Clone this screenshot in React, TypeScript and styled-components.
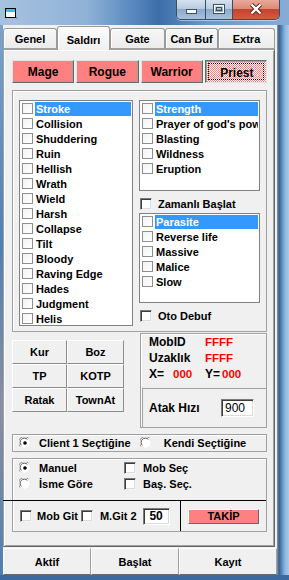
import React from "react";
import styled, { createGlobalStyle } from "styled-components";

const GlobalStyle = createGlobalStyle`
  html, body {
    margin: 0;
    padding: 0;
    background: #fff;
  }
  body {
    font-family: "Liberation Sans", Arial, sans-serif;
    font-size: 11px;
    color: #000;
  }
`;

const Window = styled.div`
  width: 289px;
  height: 580px;
  display: flex;
  flex-direction: column;
  overflow: hidden;
  background: linear-gradient(180deg, #6f97c4 0%, #4d7cb1 60%, #3c6aa0 100%);
`;

const TitleBar = styled.div`
  height: 25px;
  display: flex;
  align-items: flex-start;
  background: linear-gradient(
    90deg,
    #a6c2e0 0%,
    #90b2d7 30%,
    #5b8bc0 45%,
    #3e6ea8 55%,
    #6b99cd 72%,
    #86acd6 100%
  );
`;

const TitleIcon = styled.svg`
  margin: 8px 0 0 5px;
`;

const CaptionGroup = styled.div`
  margin-left: auto;
  margin-right: 9px;
  height: 19px;
  display: flex;
  border: 1px solid #3a4d66;
  border-top: none;
  border-radius: 0 0 5px 5px;
  overflow: hidden;
  box-shadow: 0 1px 0 rgba(255, 255, 255, 0.45);
`;

const CaptionBtn = styled.div<{ $w: number; $close?: boolean }>`
  width: ${(p) => p.$w}px;
  display: flex;
  justify-content: center;
  align-items: flex-start;
  padding-top: ${(p) => (p.$close ? 3 : 4)}px;
  box-sizing: border-box;
  background: ${(p) =>
    p.$close
      ? "linear-gradient(180deg, #e9a99a 0%, #dc8b78 45%, #c4442c 50%, #d65a3e 100%)"
      : "linear-gradient(180deg, #d6e2ef 0%, #b7cbe0 45%, #8eaacb 50%, #a8c1dc 100%)"};
  & + & {
    border-left: 1px solid #3a4d66;
  }
`;

const Body = styled.div`
  display: flex;
  height: 550px;
`;

const LeftFrame = styled.div`
  width: 3px;
  background: linear-gradient(180deg, #7aa2cc 0%, #4f80b6 40%, #8a8fa0 70%, #4e7fb4 100%);
`;

const RightFrame = styled.div`
  flex: 1;
  background: linear-gradient(
    90deg,
    #8b97a6 0,
    #3a5f88 2px,
    #4c7eb4 4px,
    #8db6df 8px,
    #a9c9e7 12px
  );
`;

const Client = styled.div`
  width: 274px;
  height: 550px;
  background: #f0f0f0;
  display: flex;
  flex-direction: column;
`;

const TabStrip = styled.div`
  height: 24px;
  display: flex;
  align-items: flex-end;
  position: relative;
  z-index: 1;
`;

const Tab = styled.div<{ $w: number; $active?: boolean }>`
  width: ${(p) => p.$w}px;
  height: ${(p) => (p.$active ? 24 : 21)}px;
  margin-bottom: ${(p) => (p.$active ? -1 : 0)}px;
  box-sizing: border-box;
  border: 1px solid #9a9a9a;
  border-bottom: ${(p) => (p.$active ? "none" : "1px solid #a0a0a0")};
  border-radius: 3px 3px 0 0;
  box-shadow: inset 1px 1px #fff;
  background: ${(p) =>
    p.$active ? "linear-gradient(180deg, #fcfcfc, #f0f0f0)" : "linear-gradient(180deg, #f6f6f6, #ececec)"};
  display: flex;
  align-items: center;
  justify-content: center;
  padding-top: ${(p) => (p.$active ? 2 : 0)}px;
  font-weight: bold;
  font-size: 11px;
`;

const TabPage = styled.div`
  box-sizing: border-box;
  width: 272px;
  height: 498px;
  border: 1px solid;
  border-color: #a0a0a0 #696969 #696969 #a0a0a0;
  box-shadow: inset 1px 1px #fff, inset -1px -1px #a0a0a0;
  padding: 10px 7px 0 8px;
  display: flex;
  flex-direction: column;
`;

const ClassRow = styled.div`
  display: grid;
  grid-template-columns: repeat(4, 1fr);
  gap: 2px;
  height: 23px;
`;

const ClassButton = styled.div<{ $pressed?: boolean }>`
  box-sizing: border-box;
  display: flex;
  align-items: center;
  justify-content: center;
  font-weight: bold;
  font-size: 12px;
  border: 1px solid;
  border-color: ${(p) =>
    p.$pressed ? "#696969 #e3e3e3 #e3e3e3 #696969" : "#e3e3e3 #696969 #696969 #e3e3e3"};
  box-shadow: ${(p) => (p.$pressed ? "inset 1px 1px #a0a0a0" : "inset -1px -1px #a0a0a0")};
  background-color: #ff8080;
  background-image: ${(p) =>
    p.$pressed ? "repeating-conic-gradient(#ff8080 0% 25%, #ffffff 0% 50%)" : "none"};
  background-size: 2px 2px;
  padding: ${(p) => (p.$pressed ? "2px 0 0 2px" : "0")};
  outline: ${(p) => (p.$pressed ? "1px dotted #000" : "none")};
  outline-offset: -4px;
`;

const SkillGroup = styled.div`
  margin-top: 7px;
  height: 242px;
  box-sizing: border-box;
  border: 1px solid #a0a0a0;
  box-shadow: inset 1px 1px #fff;
  padding: 9px 6px 5px 6px;
  display: flex;
  gap: 6px;
`;

const ListBox = styled.div<{ $w: number; $h: number }>`
  box-sizing: border-box;
  width: ${(p) => p.$w}px;
  height: ${(p) => p.$h}px;
  flex: none;
  border: 1px solid #828282;
  background: #fff;
  padding: 0 1px 0 2px;
  overflow: hidden;
`;

const ListItem = styled.div`
  height: 15px;
  display: flex;
  align-items: center;
  white-space: nowrap;
`;

const ListCheck = styled.span`
  flex: none;
  width: 11px;
  height: 11px;
  box-sizing: border-box;
  border: 1px solid #8e8f8f;
  background: linear-gradient(135deg, #f2f2f2, #fff);
  margin-right: 2px;
`;

const ItemLabel = styled.span<{ $selected?: boolean }>`
  flex: 1;
  height: 14px;
  line-height: 14px;
  padding-left: 1px;
  overflow: hidden;
  font-weight: bold;
  font-size: 11px;
  background: ${(p) => (p.$selected ? "#3399ff" : "transparent")};
  color: ${(p) => (p.$selected ? "#fff" : "#000")};
`;

const RightColumn = styled.div`
  width: 121px;
  display: flex;
  flex-direction: column;
`;

const CheckRow = styled.div<{ $top: number }>`
  margin-top: ${(p) => p.$top}px;
  height: 13px;
  display: flex;
  align-items: center;
  font-weight: bold;
  font-size: 11px;
  white-space: nowrap;
`;

const ClassicCheck = styled.span<{ $gap?: number; $left?: number }>`
  flex: none;
  width: 12px;
  height: 12px;
  box-sizing: border-box;
  border: 1px solid;
  border-color: #7a7a7a #f4f4f4 #f4f4f4 #7a7a7a;
  box-shadow: inset 1px 1px #3c3c3c, inset -1px -1px #dcdcdc;
  background: #fff;
  margin-left: ${(p) => p.$left ?? 0}px;
  margin-right: ${(p) => p.$gap ?? 6}px;
`;

const LowerRow = styled.div`
  margin-top: 1px;
  display: flex;
  align-items: flex-start;
`;

const ButtonGrid = styled.div`
  margin-top: 7px;
  display: grid;
  grid-template-columns: 55px 57px;
  grid-auto-rows: 24px;
`;

const GridButton = styled.div`
  box-sizing: border-box;
  display: flex;
  align-items: center;
  justify-content: center;
  font-weight: bold;
  font-size: 11px;
  border: 1px solid;
  border-color: #fff #8c8c8c #8c8c8c #fff;
  background: #f0f0f0;
`;

const InfoGroup = styled.div`
  margin-left: 16px;
  width: 127px;
  height: 95px;
  box-sizing: border-box;
  border: 1px solid #a0a0a0;
  box-shadow: inset 1px 1px #fff;
  display: flex;
  flex-direction: column;
`;

const InfoTop = styled.div`
  height: 54px;
  padding: 0 0 0 8px;
  display: flex;
  flex-direction: column;
  gap: 1px;
`;

const InfoRow = styled.div`
  height: 15px;
  display: flex;
  align-items: center;
  font-weight: bold;
  font-size: 12px;
  white-space: nowrap;
`;

const InfoCell = styled.span<{ $w?: number; $red?: boolean }>`
  width: ${(p) => (p.$w ? `${p.$w}px` : "auto")};
  color: ${(p) => (p.$red ? "#ff0000" : "#000")};
  font-size: ${(p) => (p.$red ? 11.5 : 12)}px;
`;

const InfoBottom = styled.div`
  flex: 1;
  margin-left: 1px;
  border-top: 1px solid #a0a0a0;
  border-left: 1px solid #a0a0a0;
  display: flex;
  align-items: center;
  padding-left: 6px;
  font-weight: bold;
  font-size: 12px;
`;

const Field = styled.div<{ $w: number; $h: number; $bold?: boolean }>`
  width: ${(p) => p.$w}px;
  height: ${(p) => p.$h}px;
  box-sizing: border-box;
  border: 1px solid;
  border-color: #7a7a7a #fff #fff #7a7a7a;
  box-shadow: inset 1px 1px #3c3c3c, inset -1px -1px #dcdcdc;
  background: #fff;
  display: flex;
  align-items: center;
  justify-content: ${(p) => (p.$bold ? "center" : "flex-start")};
  padding-left: ${(p) => (p.$bold ? 0 : 3)}px;
  font-weight: ${(p) => (p.$bold ? "bold" : "normal")};
  font-size: 12px;
`;

const RadioBox = styled.div`
  margin-top: 6px;
  height: 18px;
  box-sizing: border-box;
  border: 1px solid #a0a0a0;
  box-shadow: inset 1px 1px #fff;
  display: flex;
  align-items: center;
  padding-left: 6px;
  font-weight: bold;
  font-size: 11px;
  white-space: nowrap;
`;

const RadioOption = styled.div<{ $gap: number; $left?: number }>`
  display: flex;
  align-items: center;
  gap: ${(p) => p.$gap}px;
  margin-left: ${(p) => p.$left ?? 0}px;
`;

const OptionsBox = styled.div`
  margin-top: 6px;
  height: 74px;
  box-sizing: border-box;
  border: 1px solid #a0a0a0;
  box-shadow: inset 1px 1px #fff;
  display: flex;
  flex-direction: column;
`;

const OptionsTop = styled.div`
  height: 41px;
  box-sizing: border-box;
  padding: 2px 0 0 6px;
  display: grid;
  grid-template-columns: 105px 1fr;
  grid-auto-rows: 13px;
  row-gap: 3px;
  font-weight: bold;
  font-size: 11px;
`;

const OptionCell = styled.div<{ $gap: number }>`
  display: flex;
  align-items: center;
  gap: ${(p) => p.$gap}px;
  white-space: nowrap;
`;

const OptionsBottom = styled.div`
  margin-left: -10px;
  height: 31px;
  box-sizing: border-box;
  border-top: 1px solid #000;
  display: flex;
  font-weight: bold;
  font-size: 11px;
`;

const BottomLeft = styled.div`
  width: 178px;
  box-sizing: border-box;
  border-right: 1px solid #000;
  display: flex;
  align-items: center;
  padding-left: 17px;
  white-space: nowrap;
`;

const BottomRight = styled.div`
  flex: 1;
  display: flex;
  align-items: center;
  padding-left: 7px;
`;

const TakipButton = styled.div`
  width: 71px;
  height: 15px;
  box-sizing: border-box;
  border: 1px solid;
  border-color: #fff #696969 #696969 #fff;
  background: #ff8080;
  display: flex;
  align-items: center;
  justify-content: center;
  font-weight: bold;
  font-size: 11px;
`;

const BottomBar = styled.div`
  margin-top: 1px;
  height: 27px;
  display: flex;
`;

const BarButton = styled.div<{ $w: number }>`
  width: ${(p) => p.$w}px;
  box-sizing: border-box;
  border: 1px solid;
  border-color: #fff #a0a0a0 #696969 #fff;
  display: flex;
  align-items: center;
  justify-content: center;
  font-weight: bold;
  font-size: 11px;
`;

const Radio = ({ checked }: { checked?: boolean }) => (
  <svg width="12" height="12" viewBox="0 0 12 12">
    <circle cx="6" cy="6" r="5.5" fill="#fff" />
    <path d="M1.2 9.6 A5.2 5.2 0 0 1 9.6 1.2" fill="none" stroke="#8a8a8a" />
    <path d="M2.4 8.4 A3.6 3.6 0 0 1 8.4 2.4" fill="none" stroke="#5a5a5a" />
    <path d="M9.6 1.2 A5.2 5.2 0 0 1 1.2 9.6" fill="none" stroke="#e8e8e8" />
    {checked && <circle cx="6" cy="6" r="1.8" fill="#000" />}
  </svg>
);

const leftSkills = [
  "Stroke",
  "Collision",
  "Shuddering",
  "Ruin",
  "Hellish",
  "Wrath",
  "Wield",
  "Harsh",
  "Collapse",
  "Tilt",
  "Bloody",
  "Raving Edge",
  "Hades",
  "Judgment",
  "Helis",
];
const buffSkills = ["Strength", "Prayer of god's power", "Blasting", "Wildness", "Eruption"];
const debuffSkills = ["Parasite", "Reverse life", "Massive", "Malice", "Slow"];

const tabs = [
  { name: "Genel", w: 54 },
  { name: "Saldırı", w: 53, active: true },
  { name: "Gate", w: 55 },
  { name: "Can Buf", w: 53 },
  { name: "Extra", w: 57 },
];

const SkillList = ({ items, w, h }: { items: string[]; w: number; h: number }) => (
  <ListBox $w={w} $h={h}>
    {items.map((s, i) => (
      <ListItem key={s}>
        <ListCheck />
        <ItemLabel $selected={i === 0}>{s}</ItemLabel>
      </ListItem>
    ))}
  </ListBox>
);

export default function App() {
  return (
    <>
      <GlobalStyle />
      <Window>
        <TitleBar>
          <TitleIcon width="13" height="11" viewBox="0 0 13 11">
            <rect x="0.5" y="0.5" width="10" height="9" fill="#fff" stroke="#000" />
            <rect x="1" y="1" width="9" height="3" fill="#2cc6ea" />
            <path d="M11 9.5 L12.5 10.5" stroke="#5a6a7a" />
          </TitleIcon>
          <CaptionGroup>
            <CaptionBtn $w={28}>
              <svg width="11" height="11" viewBox="0 0 11 11">
                <rect x="0.5" y="5.5" width="10" height="4" fill="#fff" stroke="#3d4d62" />
              </svg>
            </CaptionBtn>
            <CaptionBtn $w={27}>
              <svg width="12" height="10" viewBox="0 0 12 10">
                <rect x="0.5" y="0.5" width="11" height="9" fill="none" stroke="#3d4d62" />
                <rect x="1.5" y="1.5" width="9" height="7" fill="none" stroke="#fff" strokeWidth="1" />
                <rect x="3.5" y="3.5" width="5" height="3" fill="none" stroke="#3d4d62" />
              </svg>
            </CaptionBtn>
            <CaptionBtn $w={47} $close>
              <svg width="14" height="12" viewBox="0 0 14 12">
                <path d="M2.5 1.5 L11.5 10.5 M11.5 1.5 L2.5 10.5" stroke="#5b1d14" strokeWidth="4.2" />
                <path d="M2.5 1.5 L11.5 10.5 M11.5 1.5 L2.5 10.5" stroke="#fff" strokeWidth="2.4" />
              </svg>
            </CaptionBtn>
          </CaptionGroup>
        </TitleBar>
        <Body>
          <LeftFrame />
          <Client>
            <TabStrip>
              {tabs.map((t) => (
                <Tab key={t.name} $w={t.w} $active={t.active}>
                  {t.name}
                </Tab>
              ))}
            </TabStrip>
            <TabPage>
              <ClassRow>
                <ClassButton>Mage</ClassButton>
                <ClassButton>Rogue</ClassButton>
                <ClassButton>Warrior</ClassButton>
                <ClassButton $pressed>Priest</ClassButton>
              </ClassRow>

              <SkillGroup>
                <SkillList items={leftSkills} w={114} h={226} />
                <RightColumn>
                  <SkillList items={buffSkills} w={121} h={91} />
                  <CheckRow $top={6}>
                    <ClassicCheck $left={1} />
                    Zamanlı Başlat
                  </CheckRow>
                  <div style={{ marginTop: 3 }}>
                    <SkillList items={debuffSkills} w={121} h={90} />
                  </div>
                  <CheckRow $top={6}>
                    <ClassicCheck $left={1} />
                    Oto Debuf
                  </CheckRow>
                </RightColumn>
              </SkillGroup>

              <LowerRow>
                <ButtonGrid>
                  <GridButton>Kur</GridButton>
                  <GridButton>Boz</GridButton>
                  <GridButton>TP</GridButton>
                  <GridButton>KOTP</GridButton>
                  <GridButton>Ratak</GridButton>
                  <GridButton>TownAt</GridButton>
                </ButtonGrid>
                <InfoGroup>
                  <InfoTop>
                    <InfoRow>
                      <InfoCell $w={56}>MobID</InfoCell>
                      <InfoCell $red>FFFF</InfoCell>
                    </InfoRow>
                    <InfoRow>
                      <InfoCell $w={56}>Uzaklık</InfoCell>
                      <InfoCell $red>FFFF</InfoCell>
                    </InfoRow>
                    <InfoRow>
                      <InfoCell $w={24}>X=</InfoCell>
                      <InfoCell $w={32} $red>
                        000
                      </InfoCell>
                      <InfoCell $w={17}>Y=</InfoCell>
                      <InfoCell $red>000</InfoCell>
                    </InfoRow>
                  </InfoTop>
                  <InfoBottom>
                    <span style={{ width: 72 }}>Atak Hızı</span>
                    <Field $w={33} $h={18}>
                      900
                    </Field>
                  </InfoBottom>
                </InfoGroup>
              </LowerRow>

              <RadioBox>
                <RadioOption $gap={8}>
                  <Radio checked />
                  Client 1 Seçtiğine
                </RadioOption>
                <RadioOption $gap={12} $left={9}>
                  <Radio />
                  Kendi Seçtiğine
                </RadioOption>
              </RadioBox>

              <OptionsBox>
                <OptionsTop>
                  <OptionCell $gap={8}>
                    <Radio checked />
                    Manuel
                  </OptionCell>
                  <OptionCell $gap={0}>
                    <ClassicCheck $gap={7} />
                    Mob Seç
                  </OptionCell>
                  <OptionCell $gap={8}>
                    <Radio />
                    İsme Göre
                  </OptionCell>
                  <OptionCell $gap={0}>
                    <ClassicCheck $gap={7} />
                    Baş. Seç.
                  </OptionCell>
                </OptionsTop>
                <OptionsBottom>
                  <BottomLeft>
                    <ClassicCheck $gap={5} />
                    Mob Git
                    <ClassicCheck $left={3} $gap={7} />
                    M.Git 2
                    <div style={{ marginLeft: 6 }}>
                      <Field $w={27} $h={17} $bold>
                        50
                      </Field>
                    </div>
                  </BottomLeft>
                  <BottomRight>
                    <TakipButton>TAKİP</TakipButton>
                  </BottomRight>
                </OptionsBottom>
              </OptionsBox>
            </TabPage>
            <BottomBar>
              <BarButton $w={88}>Aktif</BarButton>
              <BarButton $w={88}>Başlat</BarButton>
              <BarButton $w={98}>Kayıt</BarButton>
            </BottomBar>
          </Client>
          <RightFrame />
        </Body>
      </Window>
    </>
  );
}
